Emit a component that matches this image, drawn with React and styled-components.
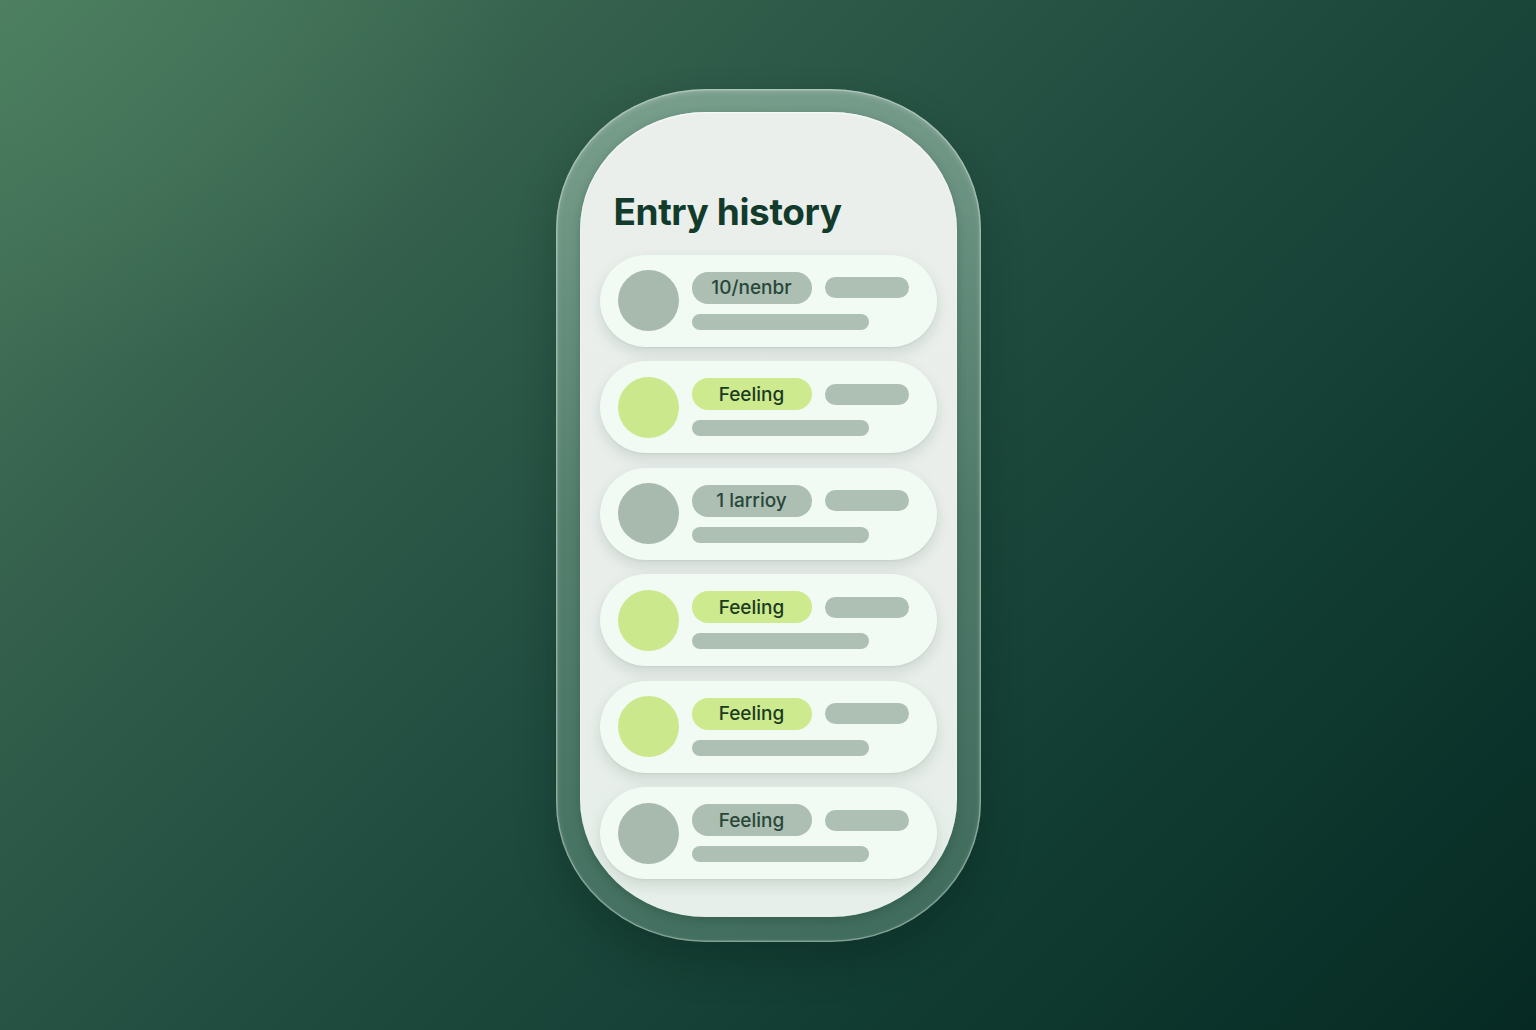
import React from "react";
import styled, { createGlobalStyle } from "styled-components";

const Global = createGlobalStyle`
  html, body { margin: 0; padding: 0; height: 100%; }
  body {
    font-family: Inter, "Noto Sans", "Liberation Sans", sans-serif;
    background: #1d4a3a;
  }
  #root { height: 100%; }
`;

const Stage = styled.div`
  width: 1536px;
  height: 1030px;
  display: flex;
  align-items: center;
  justify-content: center;
  overflow: hidden;
  background:
    radial-gradient(ellipse 700px 500px at 0% 0%, rgba(80, 132, 100, 0.45), rgba(80, 132, 100, 0) 75%),
    linear-gradient(135deg, #4a7b5d 0%, #335f4c 25%, #1f4c3f 50%, #123d33 72%, #062a23 100%);
`;

const Shell = styled.div`
  width: 425px;
  height: 853px;
  box-sizing: border-box;
  padding: 23px 24px 25px;
  border-radius: 150px / 140px;
  background: linear-gradient(180deg, rgba(180, 212, 194, 0.55) 0%, rgba(150, 190, 168, 0.42) 50%, rgba(120, 165, 145, 0.45) 100%);
  box-shadow:
    inset 0 0 0 1.5px rgba(225, 240, 230, 0.35),
    inset 0 2px 6px rgba(255, 255, 255, 0.25),
    0 20px 40px rgba(0, 20, 12, 0.25);
  display: flex;
`;

const Card = styled.div`
  flex: 1;
  box-sizing: border-box;
  border-radius: 126px / 118px;
  padding: 77px 20px 0;
  background: linear-gradient(180deg, #eaefec 0%, #e9eeeb 60%, #e6efe9 100%);
  box-shadow: 0 3px 10px rgba(10, 50, 30, 0.25), inset 0 1px 2px rgba(255,255,255,0.8);
  display: flex;
  flex-direction: column;
`;

const Title = styled.h1`
  margin: 0 0 20px 14px;
  font-size: 37px;
  line-height: 46px;
  font-weight: 700;
  letter-spacing: -0.4px;
  color: #123b2c;
`;

const List = styled.div`
  display: flex;
  flex-direction: column;
  gap: 14.5px;
`;

const Row = styled.div`
  height: 92px;
  box-sizing: border-box;
  border-radius: 46px;
  background: #f2faf4;
  padding: 0 0 0 18px;
  display: flex;
  align-items: center;
  gap: 13px;
  box-shadow: 0 6px 14px rgba(20, 60, 35, 0.13), 0 1px 2px rgba(20, 60, 35, 0.06);
`;

const Avatar = styled.div`
  width: 61px;
  height: 61px;
  border-radius: 50%;
  flex: none;
  background: ${(p) => (p.$green ? "#cce88c" : "#a8baad")};
`;

const Content = styled.div`
  display: flex;
  flex-direction: column;
  gap: 10px;
`;

const TopLine = styled.div`
  display: flex;
  align-items: center;
  gap: 13px;
`;

const Tag = styled.div`
  width: 120px;
  height: 32px;
  border-radius: 16px;
  display: flex;
  align-items: center;
  justify-content: center;
  font-size: 19px;
  font-weight: 500;
  color: ${(p) => (p.$green ? "#1b3a22" : "#28473a")};
  background: ${(p) => (p.$green ? "#cdea8e" : "#acbfb2")};
`;

const Bar = styled.div`
  width: ${(p) => p.$w}px;
  height: ${(p) => p.$h}px;
  border-radius: ${(p) => p.$h / 2}px;
  background: #adc0b3;
`;

const rows = [
  { label: "10/nenbr", green: false },
  { label: "Feeling", green: true },
  { label: "1 larrioy", green: false },
  { label: "Feeling", green: true },
  { label: "Feeling", green: true },
  { label: "Feeling", green: false },
];

export default function App() {
  return (
    <>
      <Global />
      <Stage>
        <Shell>
          <Card>
            <Title>Entry history</Title>
            <List>
              {rows.map((r, i) => (
                <Row key={i}>
                  <Avatar $green={r.green} />
                  <Content>
                    <TopLine>
                      <Tag $green={r.green}>{r.label}</Tag>
                      <Bar $w={84} $h={21} />
                    </TopLine>
                    <Bar $w={177} $h={16} />
                  </Content>
                </Row>
              ))}
            </List>
          </Card>
        </Shell>
      </Stage>
    </>
  );
}
